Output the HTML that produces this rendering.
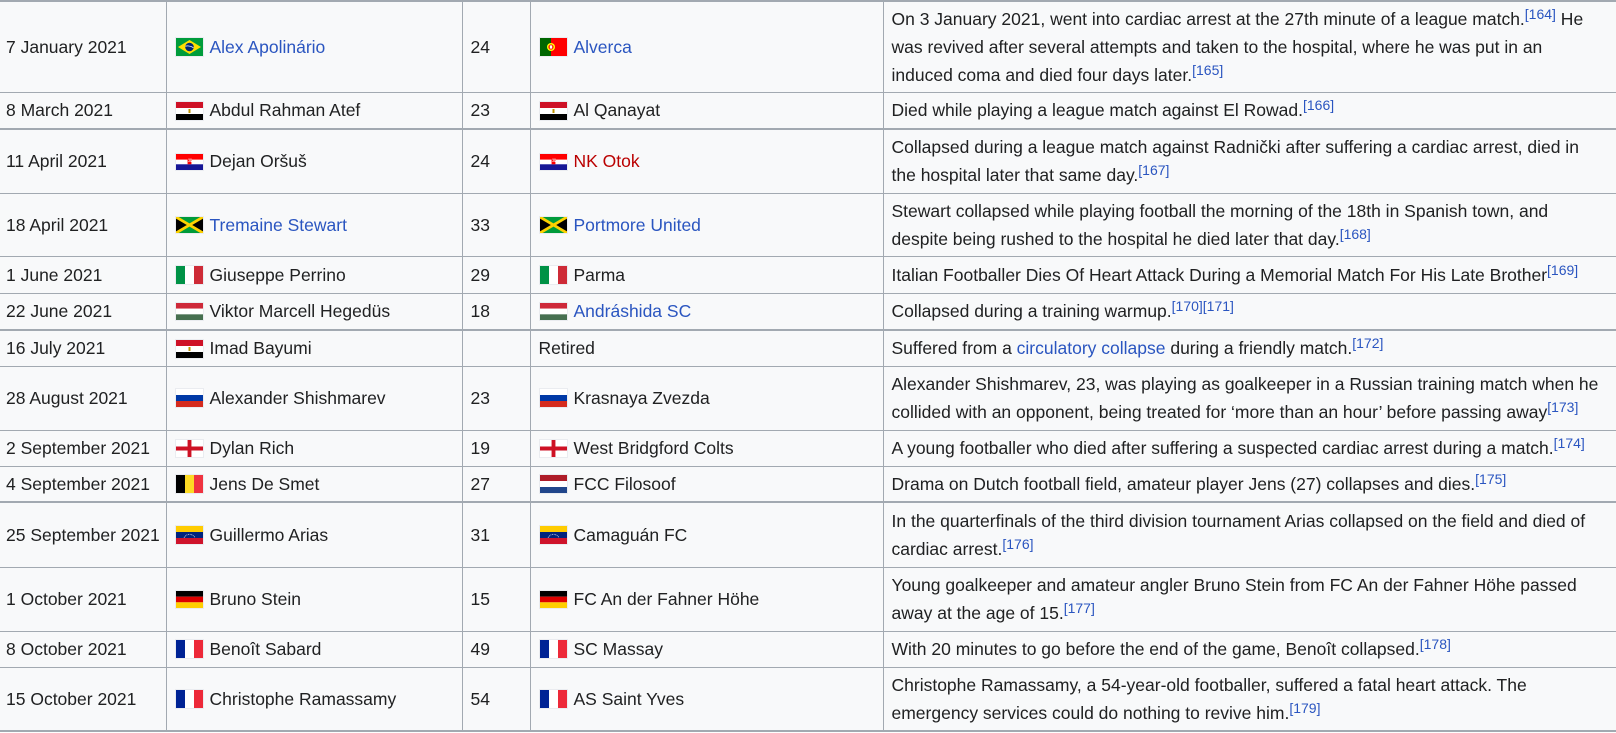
<!DOCTYPE html>
<html><head><meta charset="utf-8"><style>
html,body{margin:0;padding:0;background:#fff;overflow:hidden;width:1616px;height:733px}
table{border-collapse:collapse;table-layout:fixed;width:1640px;background:#f8f9fa;color:#202122;font-family:"Liberation Sans",Arial,sans-serif;font-size:17.5px;line-height:28px;border-top:2px solid #a2a9b1}
td{border:1px solid #a2a9b1;padding:0 8px;vertical-align:middle;white-space:nowrap;overflow:hidden}
td:first-child{border-left:none;padding-left:6px}
tr.t td{border-bottom:2px solid #a2a9b1}
a{color:#2a55c0;text-decoration:none}
a.r{color:#ba0000}
sup{font-size:14px;line-height:1;vertical-align:6px;color:#2a55c0}
.f{display:inline-block;vertical-align:middle;border:1px solid #eaecf0;margin-right:6px;position:relative;top:-1px}
</style></head><body>
<table>
<colgroup><col style="width:166px"><col style="width:296px"><col style="width:68px"><col style="width:353px"><col></colgroup>
<tr style="height:91px"><td>7 January 2021</td><td><svg class="f" width="27" height="18" viewBox="0 0 27 18"><rect width="27" height="18" fill="#009c3b"/><path d="M13.5 2L25 9 13.5 16 2 9z" fill="#ffdf00"/><circle cx="13.5" cy="9" r="4.3" fill="#002776"/><path d="M9.4 8.2q4-1 8 1.4" stroke="#fff" stroke-width="0.8" fill="none"/></svg><a>Alex Apolinário</a></td><td>24</td><td><svg class="f" width="27" height="18" viewBox="0 0 27 18"><rect width="27" height="18" fill="#f00"/><rect width="11" height="18" fill="#060"/><circle cx="11" cy="9" r="4" fill="#ff0"/><circle cx="11" cy="9" r="2.6" fill="#f00"/><rect x="9.8" y="7.4" width="2.4" height="3.2" fill="#fff"/></svg><a>Alverca</a></td><td>On 3 January 2021, went into cardiac arrest at the 27th minute of a league match.<sup>[164]</sup> He<br>was revived after several attempts and taken to the hospital, where he was put in an<br>induced coma and died four days later.<sup>[165]</sup></td></tr>
<tr class="t" style="height:37px"><td>8 March 2021</td><td><svg class="f" width="27" height="18" viewBox="0 0 27 18"><rect width="27" height="6" fill="#ce1126"/><rect y="6" width="27" height="6" fill="#fff"/><rect y="12" width="27" height="6" fill="#000"/><rect x="12.5" y="7" width="2" height="4" fill="#c09300"/></svg>Abdul Rahman Atef</td><td>23</td><td><svg class="f" width="27" height="18" viewBox="0 0 27 18"><rect width="27" height="6" fill="#ce1126"/><rect y="6" width="27" height="6" fill="#fff"/><rect y="12" width="27" height="6" fill="#000"/><rect x="12.5" y="7" width="2" height="4" fill="#c09300"/></svg>Al Qanayat</td><td>Died while playing a league match against El Rowad.<sup>[166]</sup></td></tr>
<tr style="height:64px"><td>11 April 2021</td><td><svg class="f" width="27" height="16" viewBox="0 0 28 14" preserveAspectRatio="none"><rect width="28" height="5" fill="#f00"/><rect y="5" width="28" height="4" fill="#fff"/><rect y="9" width="28" height="5" fill="#171796"/><rect x="12" y="3" width="4" height="6" fill="#f00"/><rect x="13" y="4" width="1" height="1" fill="#fff"/><rect x="15" y="4" width="1" height="1" fill="#fff"/><rect x="14" y="5" width="1" height="1" fill="#fff"/><rect x="13" y="6" width="1" height="1" fill="#fff"/><rect x="15" y="6" width="1" height="1" fill="#fff"/></svg>Dejan Oršuš</td><td>24</td><td><svg class="f" width="27" height="16" viewBox="0 0 28 14" preserveAspectRatio="none"><rect width="28" height="5" fill="#f00"/><rect y="5" width="28" height="4" fill="#fff"/><rect y="9" width="28" height="5" fill="#171796"/><rect x="12" y="3" width="4" height="6" fill="#f00"/><rect x="13" y="4" width="1" height="1" fill="#fff"/><rect x="15" y="4" width="1" height="1" fill="#fff"/><rect x="14" y="5" width="1" height="1" fill="#fff"/><rect x="13" y="6" width="1" height="1" fill="#fff"/><rect x="15" y="6" width="1" height="1" fill="#fff"/></svg><a class="r">NK Otok</a></td><td>Collapsed during a league match against Radnički after suffering a cardiac arrest, died in<br>the hospital later that same day.<sup>[167]</sup></td></tr>
<tr style="height:63px"><td>18 April 2021</td><td><svg class="f" width="27" height="16" viewBox="0 0 28 14" preserveAspectRatio="none"><rect width="28" height="14" fill="#009b3a"/><path d="M0 0L14 7 0 14zM28 0L14 7 28 14z" fill="#000"/><path d="M0 0L28 14M28 0L0 14" stroke="#fed100" stroke-width="2.5"/></svg><a>Tremaine Stewart</a></td><td>33</td><td><svg class="f" width="27" height="16" viewBox="0 0 28 14" preserveAspectRatio="none"><rect width="28" height="14" fill="#009b3a"/><path d="M0 0L14 7 0 14zM28 0L14 7 28 14z" fill="#000"/><path d="M0 0L28 14M28 0L0 14" stroke="#fed100" stroke-width="2.5"/></svg><a>Portmore United</a></td><td>Stewart collapsed while playing football the morning of the 18th in Spanish town, and<br>despite being rushed to the hospital he died later that day.<sup>[168]</sup></td></tr>
<tr style="height:37px"><td>1 June 2021</td><td><svg class="f" width="27" height="18" viewBox="0 0 27 18"><rect width="9" height="18" fill="#009246"/><rect x="9" width="9" height="18" fill="#fff"/><rect x="18" width="9" height="18" fill="#ce2b37"/></svg>Giuseppe Perrino</td><td>29</td><td><svg class="f" width="27" height="18" viewBox="0 0 27 18"><rect width="9" height="18" fill="#009246"/><rect x="9" width="9" height="18" fill="#fff"/><rect x="18" width="9" height="18" fill="#ce2b37"/></svg>Parma</td><td>Italian Footballer Dies Of Heart Attack During a Memorial Match For His Late Brother<sup>[169]</sup></td></tr>
<tr class="t" style="height:37px"><td>22 June 2021</td><td><svg class="f" width="27" height="17" viewBox="0 0 27 18" preserveAspectRatio="none"><rect width="27" height="6" fill="#ce2939"/><rect y="6" width="27" height="6" fill="#fff"/><rect y="12" width="27" height="6" fill="#477050"/></svg>Viktor Marcell Hegedüs</td><td>18</td><td><svg class="f" width="27" height="17" viewBox="0 0 27 18" preserveAspectRatio="none"><rect width="27" height="6" fill="#ce2939"/><rect y="6" width="27" height="6" fill="#fff"/><rect y="12" width="27" height="6" fill="#477050"/></svg><a>Andráshida SC</a></td><td>Collapsed during a training warmup.<sup>[170][171]</sup></td></tr>
<tr style="height:36px"><td>16 July 2021</td><td><svg class="f" width="27" height="18" viewBox="0 0 27 18"><rect width="27" height="6" fill="#ce1126"/><rect y="6" width="27" height="6" fill="#fff"/><rect y="12" width="27" height="6" fill="#000"/><rect x="12.5" y="7" width="2" height="4" fill="#c09300"/></svg>Imad Bayumi</td><td></td><td>Retired</td><td>Suffered from a <a>circulatory collapse</a> during a friendly match.<sup>[172]</sup></td></tr>
<tr style="height:64px"><td>28 August 2021</td><td><svg class="f" width="27" height="18" viewBox="0 0 27 18"><rect width="27" height="6" fill="#fff"/><rect y="6" width="27" height="6" fill="#0039a6"/><rect y="12" width="27" height="6" fill="#d52b1e"/></svg>Alexander Shishmarev</td><td>23</td><td><svg class="f" width="27" height="18" viewBox="0 0 27 18"><rect width="27" height="6" fill="#fff"/><rect y="6" width="27" height="6" fill="#0039a6"/><rect y="12" width="27" height="6" fill="#d52b1e"/></svg>Krasnaya Zvezda</td><td>Alexander Shishmarev, 23, was playing as goalkeeper in a Russian training match when he<br>collided with an opponent, being treated for ‘more than an hour’ before passing away<sup>[173]</sup></td></tr>
<tr style="height:36px"><td>2 September 2021</td><td><svg class="f" width="27" height="17" viewBox="0 0 28 17" preserveAspectRatio="none"><rect width="28" height="17" fill="#fff"/><rect x="12" width="4" height="17" fill="#ce1124"/><rect y="6.5" width="28" height="4" fill="#ce1124"/></svg>Dylan Rich</td><td>19</td><td><svg class="f" width="27" height="17" viewBox="0 0 28 17" preserveAspectRatio="none"><rect width="28" height="17" fill="#fff"/><rect x="12" width="4" height="17" fill="#ce1124"/><rect y="6.5" width="28" height="4" fill="#ce1124"/></svg>West Bridgford Colts</td><td>A young footballer who died after suffering a suspected cardiac arrest during a match.<sup>[174]</sup></td></tr>
<tr class="t" style="height:36px"><td>4 September 2021</td><td><svg class="f" width="27" height="18" viewBox="0 0 27 18"><rect width="9" height="18" fill="#000"/><rect x="9" width="9" height="18" fill="#fdda24"/><rect x="18" width="9" height="18" fill="#ef3340"/></svg>Jens De Smet</td><td>27</td><td><svg class="f" width="27" height="18" viewBox="0 0 27 18"><rect width="27" height="6" fill="#ae1c28"/><rect y="6" width="27" height="6" fill="#fff"/><rect y="12" width="27" height="6" fill="#21468b"/></svg>FCC Filosoof</td><td>Drama on Dutch football field, amateur player Jens (27) collapses and dies.<sup>[175]</sup></td></tr>
<tr style="height:65px"><td>25 September 2021</td><td><svg class="f" width="27" height="18" viewBox="0 0 27 18"><rect width="27" height="6" fill="#fc0"/><rect y="6" width="27" height="6" fill="#00247d"/><rect y="12" width="27" height="6" fill="#cf142b"/><path d="M8 11.5Q13.5 5 19 11.5" stroke="#fff" stroke-width="0.8" stroke-dasharray="0.8 0.9" fill="none"/></svg>Guillermo Arias</td><td>31</td><td><svg class="f" width="27" height="18" viewBox="0 0 27 18"><rect width="27" height="6" fill="#fc0"/><rect y="6" width="27" height="6" fill="#00247d"/><rect y="12" width="27" height="6" fill="#cf142b"/><path d="M8 11.5Q13.5 5 19 11.5" stroke="#fff" stroke-width="0.8" stroke-dasharray="0.8 0.9" fill="none"/></svg>Camaguán FC</td><td>In the quarterfinals of the third division tournament Arias collapsed on the field and died of<br>cardiac arrest.<sup>[176]</sup></td></tr>
<tr style="height:64px"><td>1 October 2021</td><td><svg class="f" width="27" height="17" viewBox="0 0 27 18" preserveAspectRatio="none"><rect width="27" height="6" fill="#000"/><rect y="6" width="27" height="6" fill="#d00"/><rect y="12" width="27" height="6" fill="#ffce00"/></svg>Bruno Stein</td><td>15</td><td><svg class="f" width="27" height="17" viewBox="0 0 27 18" preserveAspectRatio="none"><rect width="27" height="6" fill="#000"/><rect y="6" width="27" height="6" fill="#d00"/><rect y="12" width="27" height="6" fill="#ffce00"/></svg>FC An der Fahner Höhe</td><td>Young goalkeeper and amateur angler Bruno Stein from FC An der Fahner Höhe passed<br>away at the age of 15.<sup>[177]</sup></td></tr>
<tr style="height:36px"><td>8 October 2021</td><td><svg class="f" width="27" height="18" viewBox="0 0 27 18"><rect width="9" height="18" fill="#002395"/><rect x="9" width="9" height="18" fill="#fff"/><rect x="18" width="9" height="18" fill="#ed2939"/></svg>Benoît Sabard</td><td>49</td><td><svg class="f" width="27" height="18" viewBox="0 0 27 18"><rect width="9" height="18" fill="#002395"/><rect x="9" width="9" height="18" fill="#fff"/><rect x="18" width="9" height="18" fill="#ed2939"/></svg>SC Massay</td><td>With 20 minutes to go before the end of the game, Benoît collapsed.<sup>[178]</sup></td></tr>
<tr class="t" style="height:64px"><td>15 October 2021</td><td><svg class="f" width="27" height="18" viewBox="0 0 27 18"><rect width="9" height="18" fill="#002395"/><rect x="9" width="9" height="18" fill="#fff"/><rect x="18" width="9" height="18" fill="#ed2939"/></svg>Christophe Ramassamy</td><td>54</td><td><svg class="f" width="27" height="18" viewBox="0 0 27 18"><rect width="9" height="18" fill="#002395"/><rect x="9" width="9" height="18" fill="#fff"/><rect x="18" width="9" height="18" fill="#ed2939"/></svg>AS Saint Yves</td><td>Christophe Ramassamy, a 54-year-old footballer, suffered a fatal heart attack. The<br>emergency services could do nothing to revive him.<sup>[179]</sup></td></tr>
</table>
</body></html>
